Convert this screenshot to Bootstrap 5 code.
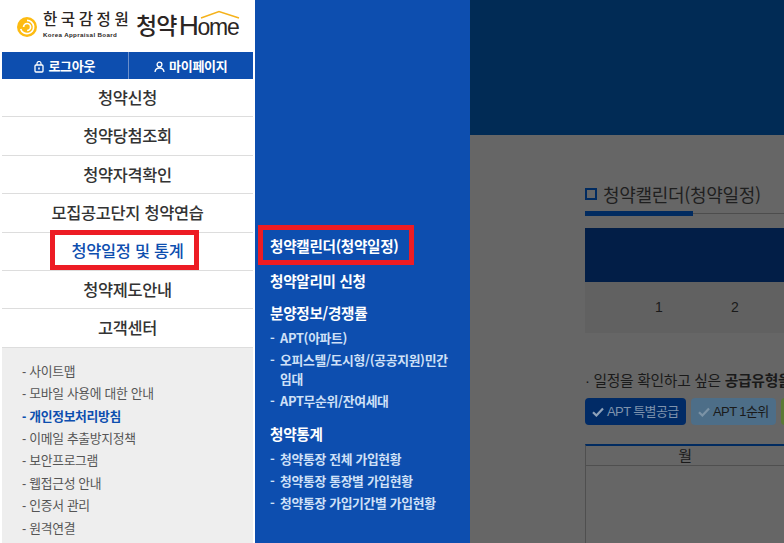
<!DOCTYPE html>
<html lang="ko">
<head>
  <meta charset="UTF-8" />
  <meta name="viewport" content="width=device-width, initial-scale=1" />
  <title>청약캘린더</title>
  <link href="https://cdn.jsdelivr.net/npm/bootstrap@5.3.3/dist/css/bootstrap.min.css" rel="stylesheet" />
  <style>
    html, body { height: 543px; overflow: hidden; }
    body { background: #666; font-family: "Liberation Sans", "Noto Sans CJK KR", sans-serif; letter-spacing: -0.3px; position: relative; }
    .app-shell { height: 543px; width: 784px; }

    .side-col { width: 255px; background: #fff; padding: 0 2px; }
    .logo-box { height: 52px; padding-left: 15px; }
    .logo-emblem { margin-right: 6px; margin-top: 1px; }
    .logo-name { width: 94px; margin-top: -3px; }
    .logo-kr { font-size: 15.500px; line-height: 16px; font-weight: 500; letter-spacing: 3.600px; color: #2b2523; margin-bottom: 3px; white-space: nowrap; }
    .logo-en { font-size: 6.200px; line-height: 7px; font-weight: 700; color: #2b2523; letter-spacing: .35px; white-space: nowrap; }
    .logo-big { font-size: 23px; font-weight: 500; color: #2b2523; letter-spacing: -.8px; line-height: 1; white-space: nowrap; margin-left: -1px; }
    .logo-home { font-size: 28px; color: #2b2523; letter-spacing: -1.500px; line-height: 1; position: relative; white-space: nowrap; margin-left: 2px; }
    .logo-ome { font-size: 23px; letter-spacing: -1.200px; }
    .logo-roof { position: absolute; left: 21px; top: -2px; }
    .user-bar { height: 27px; background: #0d4eaf; }
    .user-link { color: #fff; font-size: 13px; font-weight: 700; text-decoration: none; height: 27px; padding-top: 2px; }
    .user-link + .user-link { border-left: 1px solid #6b8fcb; }
    .main-link { height: 38.400px; color: #333; font-size: 16.400px; font-weight: 500; text-decoration: none; border-bottom: 1px solid #ddd; padding-top: 1px; }
    .main-link.is-on { color: #0d4eaf; }
    .util-box { background: #eee; padding: 13px 0 0 20px; height: 196px; }
    .util-link { display: block; height: 22.450px; line-height: 22.450px; color: #555; font-size: 12.800px; text-decoration: none; white-space: nowrap; }
    .util-link.is-on { color: #0d4eaf; font-weight: 700; }

    .sub-col { width: 215px; background: #0d4eaf; padding: 237px 15px 0; font-family: "Noto Sans CJK KR", "Liberation Sans", sans-serif; }
    .sub-head { display: block; color: #fff; font-size: 14.600px; font-weight: 700; text-decoration: none; line-height: 18px; white-space: nowrap; }
    .sub-head.gap-alarm { margin-top: 17px; }
    .sub-head.gap-sale { margin-top: 14px; }
    .sub-head.gap-stats { margin-top: 15.900px; }
    .sub-list { margin-top: 5.500px; }
    .sub-item { display: block; color: #cfe0f7; font-size: 12.800px; font-weight: 700; text-decoration: none; line-height: 19px; margin-bottom: 3px; padding-left: 10px; text-indent: -10px; }
    .sub-dash { display: inline-block; width: 10px; text-indent: 0; }

    .main-col { width: 314px; overflow: hidden; }
    .top-band { height: 135px; background: #012b55; }
    .title-row { padding: 48px 0 10px 115px; height: 79px; width: 700px; }
    .title-box { width: 12px; height: 12px; border: 2px solid #012b60; margin-right: 6px; }
    .title-text { font-size: 18px; color: #1f1f1f; line-height: 20px; white-space: nowrap; font-family: "Noto Sans CJK KR", "Liberation Sans", sans-serif; }
    .title-line { margin-left: 115px; width: 700px; height: 1px; background: #4d4d4d; position: relative; margin-top: -1px; }
    .title-line-on { width: 108px; height: 5px; background: #012b60; position: absolute; left: 0; top: -2px; }
    .month-panel { margin: 14px 0 0 115px; width: 700px; }
    .month-head { height: 54px; background: #021e47; }
    .month-row { height: 51px; background: #616161; padding-left: 70px; }
    .month-num { width: 76px; color: #1a1a1a; font-size: 14px; }
    .guide-text { margin: 38px 0 0 115px; white-space: nowrap; color: #1a1a1a; font-size: 14.800px; line-height: 20px; }
    .type-row { margin: 7px 0 0 115px; width: 700px; gap: 5px; }
    .type-btn { height: 27px; border-radius: 4px; font-size: 13px; letter-spacing: -.6px; color: #1a1a1a; padding-left: 7px; white-space: nowrap; gap: 3px; }
    .type-a { background: #012b66; color: #7f93ad; width: 101px; }
    .type-b { background: #4d6e88; width: 85px; }
    .type-c { background: #5b7a35; width: 60px; }
    .month-table { margin: 19px 0 0 115px; width: 700px; height: 120px; border-top: 2px solid #012b60; border-left: 1px solid #4f4f4f; }
    .month-label { height: 20px; border-bottom: 1px solid #4f4f4f; font-size: 15px; color: #1a1a1a; line-height: 20px; }
    .month-label span { display: block; width: 198px; text-align: center; }

    .note-box { position: absolute; border: 5px solid #ed1c24; pointer-events: none; }
    .note-left { left: 50px; top: 230px; width: 149px; height: 40px; }
    .note-sub { left: 258px; top: 225px; width: 156px; height: 40px; }
  </style>
</head>
<body>
  <div class="app-shell d-flex">
    <div class="side-col flex-shrink-0">
      <div class="logo-box d-flex align-items-center">
        <svg class="logo-emblem flex-shrink-0" width="20" height="20" viewBox="0 0 20 20">
          <circle cx="10" cy="10" r="10" fill="#fdbb11"/>
          <path d="M10 3.400a6.600 6.600 0 1 1-6.300 8.500" fill="none" stroke="#fff" stroke-width="1.700"/>
          <path d="M6.600 10a3.500 3.500 0 1 1 3.500 3.500" fill="none" stroke="#fff" stroke-width="1.700"/>
        </svg>
        <div class="logo-name flex-shrink-0">
          <div class="logo-kr">한국감정원</div>
          <div class="logo-en">Korea Appraisal Board</div>
        </div>
        <span class="logo-big">청약</span>
        <span class="logo-home">H<span class="logo-ome">ome</span>
          <svg class="logo-roof" width="40" height="9" viewBox="0 0 40 9"><path d="M1 8 19 1.500 39 8" fill="none" stroke="#f5b21b" stroke-width="1.500"/></svg>
        </span>
      </div>
      <div class="user-bar row g-0">
        <a href="#" class="user-link col-6 d-flex align-items-center justify-content-center gap-1">
          <svg width="10" height="12" viewBox="0 0 10 12"><rect x="1" y="4" width="8" height="7" rx="1" fill="none" stroke="#fff" stroke-width="1.300"/><path d="M3 4V2.500a2 2 0 0 1 4 0V4" fill="none" stroke="#fff" stroke-width="1.200"/><rect x="4.200" y="6.500" width="1.600" height="2" fill="#fff"/></svg>
          로그아웃
        </a>
        <a href="#" class="user-link col-6 d-flex align-items-center justify-content-center gap-1">
          <svg width="11" height="12" viewBox="0 0 11 12"><circle cx="5.500" cy="3.600" r="2.400" fill="none" stroke="#fff" stroke-width="1.300"/><path d="M1 11c.3-2.800 2-4 4.500-4s4.200 1.200 4.500 4" fill="none" stroke="#fff" stroke-width="1.300"/></svg>
          마이페이지
        </a>
      </div>
      <nav class="d-flex flex-column">
        <a href="#" class="main-link d-flex align-items-center justify-content-center">청약신청</a>
        <a href="#" class="main-link d-flex align-items-center justify-content-center">청약당첨조회</a>
        <a href="#" class="main-link d-flex align-items-center justify-content-center">청약자격확인</a>
        <a href="#" class="main-link d-flex align-items-center justify-content-center">모집공고단지 청약연습</a>
        <a href="#" class="main-link is-on d-flex align-items-center justify-content-center">청약일정 및 통계</a>
        <a href="#" class="main-link d-flex align-items-center justify-content-center">청약제도안내</a>
        <a href="#" class="main-link d-flex align-items-center justify-content-center">고객센터</a>
      </nav>
      <div class="util-box">
        <a href="#" class="util-link">- 사이트맵</a>
        <a href="#" class="util-link">- 모바일 사용에 대한 안내</a>
        <a href="#" class="util-link is-on">- 개인정보처리방침</a>
        <a href="#" class="util-link">- 이메일 추출방지정책</a>
        <a href="#" class="util-link">- 보안프로그램</a>
        <a href="#" class="util-link">- 웹접근성 안내</a>
        <a href="#" class="util-link">- 인증서 관리</a>
        <a href="#" class="util-link">- 원격연결</a>
      </div>
    </div>

    <div class="sub-col flex-shrink-0">
      <a href="#" class="sub-head">청약캘린더(청약일정)</a>
      <a href="#" class="sub-head gap-alarm">청약알리미 신청</a>
      <a href="#" class="sub-head gap-sale">분양정보/경쟁률</a>
      <div class="sub-list">
        <a href="#" class="sub-item"><span class="sub-dash">-</span>APT(아파트)</a>
        <a href="#" class="sub-item"><span class="sub-dash">-</span>오피스텔/도시형/(공공지원)민간 임대</a>
        <a href="#" class="sub-item"><span class="sub-dash">-</span>APT무순위/잔여세대</a>
      </div>
      <a href="#" class="sub-head gap-stats">청약통계</a>
      <div class="sub-list">
        <a href="#" class="sub-item"><span class="sub-dash">-</span>청약통장 전체 가입현황</a>
        <a href="#" class="sub-item"><span class="sub-dash">-</span>청약통장 통장별 가입현황</a>
        <a href="#" class="sub-item"><span class="sub-dash">-</span>청약통장 가입기간별 가입현황</a>
      </div>
    </div>

    <div class="main-col flex-shrink-0">
      <div class="top-band"></div>
      <div class="title-row d-flex align-items-center">
        <span class="title-box flex-shrink-0"></span>
        <span class="title-text">청약캘린더(청약일정)</span>
      </div>
      <div class="title-line"><div class="title-line-on"></div></div>
      <div class="month-panel">
        <div class="month-head"></div>
        <div class="month-row d-flex align-items-center">
          <span class="month-num">1</span>
          <span class="month-num">2</span>
        </div>
      </div>
      <div class="guide-text">· 일정을 확인하고 싶은 <b>공급유형을</b></div>
      <div class="type-row d-flex">
        <div class="type-btn type-a d-flex align-items-center">
          <svg width="12" height="10" viewBox="0 0 12 10"><path d="M1 5.200 4.400 8.500 11 1.500" fill="none" stroke="#8fa2ba" stroke-width="2.200"/></svg>
          APT 특별공급
        </div>
        <div class="type-btn type-b d-flex align-items-center">
          <svg width="12" height="10" viewBox="0 0 12 10"><path d="M1 5.200 4.400 8.500 11 1.500" fill="none" stroke="#7b93a6" stroke-width="2.200"/></svg>
          APT 1순위
        </div>
        <div class="type-btn type-c"></div>
      </div>
      <div class="month-table">
        <div class="month-label"><span>월</span></div>
      </div>
    </div>
  </div>

  <div class="note-box note-left"></div>
  <div class="note-box note-sub"></div>
  <script src="https://cdn.jsdelivr.net/npm/bootstrap@5.3.3/dist/js/bootstrap.bundle.min.js"></script>
</body>
</html>
